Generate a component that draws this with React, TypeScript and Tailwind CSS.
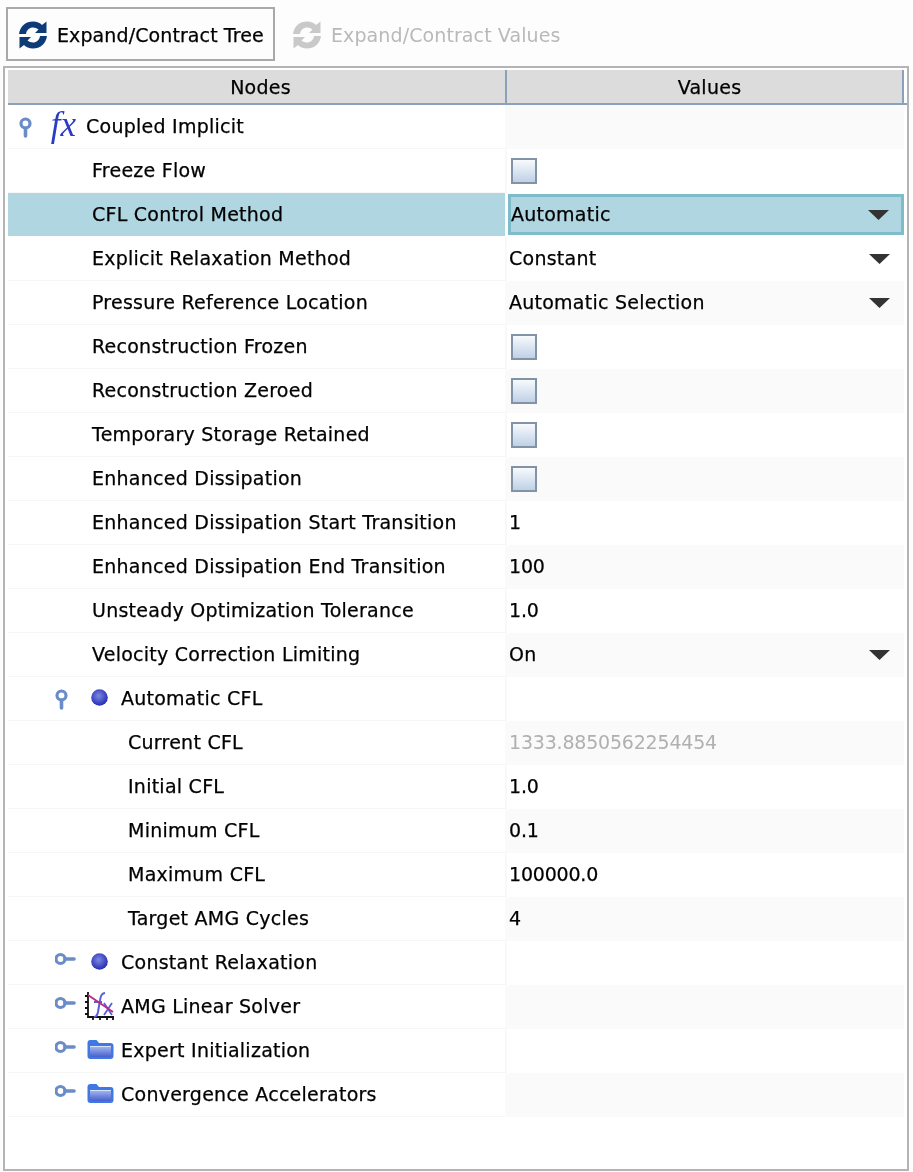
import React from "react";

const Expander = ({ open }: { open: boolean }) => (
  <svg width="22" height="22" viewBox="0 0 22 22" className="shrink-0">
    {open ? (
      <g fill="none" stroke="#6a8cc8">
        <circle cx="6.500" cy="7.500" r="4.500" strokeWidth="3.200" />
        <path d="M6.500 12v8" strokeWidth="3.600" strokeLinecap="round" />
      </g>
    ) : (
      <g fill="none" stroke="#6a8cc8">
        <circle cx="5.500" cy="7" r="4.500" strokeWidth="3.200" />
        <path d="M10 7h9" strokeWidth="3.600" strokeLinecap="round" />
      </g>
    )}
  </svg>
);

const Fx = () => (
  <span className="block w-[27px] -translate-y-[2px] text-center text-[35px] leading-none italic tracking-normal text-[#2b3bc4] [-webkit-text-stroke:0px] [font-family:'Liberation_Serif',serif]">
    fx
  </span>
);

const Ball = () => (
  <svg width="17" height="19" viewBox="0 0 17 19" className="shrink-0">
    <defs>
      <radialGradient id="ball" cx="0.45" cy="0.4" r="0.65">
        <stop offset="0" stopColor="#7f88e2" />
        <stop offset="1" stopColor="#1a25b0" />
      </radialGradient>
    </defs>
    <circle cx="8.500" cy="8.500" r="8.300" fill="url(#ball)" />
  </svg>
);

const Folder = () => (
  <svg width="27" height="24" viewBox="0 0 27 24" className="shrink-0">
    <defs>
      <linearGradient id="folder" x1="0" y1="0" x2="0" y2="1">
        <stop offset="0" stopColor="#a3b6ee" />
        <stop offset="1" stopColor="#4560cf" />
      </linearGradient>
    </defs>
    <path d="M.5 4q0-3 3-3h6l2.500 3h11.500q3 0 3 3v10q0 3-3 3h-20q-3 0-3-3z" fill="#3f78e4" />
    <path d="M3 7.500h21v9.500q0 1-1 1h-19q-1 0-1-1z" fill="url(#folder)" />
    <path d="M3 7.500h21" stroke="#d7e2fb" strokeWidth="1" />
  </svg>
);

const Chart = () => (
  <svg width="30" height="30" viewBox="0 0 30 30" className="shrink-0 -translate-y-[1px]">
    <path d="M3 1v25h26" fill="none" stroke="#111" strokeWidth="1.800" />
    <path d="M0 5h3M0 11h3M0 17h3M0 23h3M8 26v3M15 26v3M22 26v3M28 26v3" stroke="#111" strokeWidth="1.800" />
    <path d="M20 2q-4 0-5 7l-2 12q-1 5-4 5" fill="none" stroke="#5a5fd8" strokeWidth="2" />
    <path d="M9 11h8M19 12l8 12M27 12l-8 12" stroke="#5a5fd8" strokeWidth="1.800" />
    <path d="M3 4l25 17" stroke="#c0267f" strokeWidth="1.800" />
  </svg>
);

const Refresh = ({ muted }: { muted?: boolean }) => {
  const c = muted ? "#c9c9c9" : "#0f3a78";
  return (
    <svg width="30" height="28" viewBox="0 0 30 28" className="shrink-0">
      <path d="M1 13C2 5 8 .5 15 .5c4 0 7 1.500 9 3.500l4.500-3.500V12H17l3.500-3.500c-1.500-1.300-3.300-2-5.500-2-3.500 0-6.500 2.500-7 6.500z" fill={c} />
      <path d="M29 15c-1 8-7 12.500-14 12.500-4 0-7-1.500-9-3.500l-4.500 3.500V16H13l-3.500 3.500c1.500 1.300 3.300 2 5.500 2 3.500 0 6.500-2.500 7-6.500z" fill={c} />
    </svg>
  );
};

const Check = () => (
  <span className="ml-[2px] block h-[26px] w-[26px] border-2 border-[#8293a8] bg-gradient-to-b from-[#f8fafd] to-[#bfd1e6]" />
);

const Caret = ({ boxed }: { boxed?: boolean }) => (
  <svg
    width="21"
    height="11"
    viewBox="0 0 21 11"
    className={`absolute top-1/2 -translate-y-1/2 ${boxed ? "right-[12px]" : "right-[14px]"}`}
  >
    <path d="M0 .5h21L10.500 10.500z" fill="#333" />
  </svg>
);

type Row = {
  label: string;
  indent: string;
  lead?: React.ReactNode;
  check?: boolean;
  value?: string;
  select?: boolean;
  muted?: boolean;
  selected?: boolean;
};

const ballLead = (open: boolean) => (
  <>
    <Expander open={open} />
    <span className="w-[14px]" />
    <Ball />
    <span className="w-[13px]" />
  </>
);

const folderLead = (
  <>
    <Expander open={false} />
    <span className="w-[10px]" />
    <Folder />
    <span className="w-[7px]" />
  </>
);

const rows: Row[] = [
  {
    label: "Coupled Implicit",
    indent: "pl-[11px]",
    lead: (
      <>
        <Expander open />
        <span className="w-[9px]" />
        <Fx />
        <span className="w-[9px]" />
      </>
    ),
  },
  { label: "Freeze Flow", indent: "pl-[84px]", check: true },
  { label: "CFL Control Method", indent: "pl-[84px]", value: "Automatic", select: true, selected: true },
  { label: "Explicit Relaxation Method", indent: "pl-[84px]", value: "Constant", select: true },
  { label: "Pressure Reference Location", indent: "pl-[84px]", value: "Automatic Selection", select: true },
  { label: "Reconstruction Frozen", indent: "pl-[84px]", check: true },
  { label: "Reconstruction Zeroed", indent: "pl-[84px]", check: true },
  { label: "Temporary Storage Retained", indent: "pl-[84px]", check: true },
  { label: "Enhanced Dissipation", indent: "pl-[84px]", check: true },
  { label: "Enhanced Dissipation Start Transition", indent: "pl-[84px]", value: "1" },
  { label: "Enhanced Dissipation End Transition", indent: "pl-[84px]", value: "100" },
  { label: "Unsteady Optimization Tolerance", indent: "pl-[84px]", value: "1.0" },
  { label: "Velocity Correction Limiting", indent: "pl-[84px]", value: "On", select: true },
  { label: "Automatic CFL", indent: "pl-[47px]", lead: ballLead(true) },
  { label: "Current CFL", indent: "pl-[120px]", value: "1333.8850562254454", muted: true },
  { label: "Initial CFL", indent: "pl-[120px]", value: "1.0" },
  { label: "Minimum CFL", indent: "pl-[120px]", value: "0.1" },
  { label: "Maximum CFL", indent: "pl-[120px]", value: "100000.0" },
  { label: "Target AMG Cycles", indent: "pl-[120px]", value: "4" },
  { label: "Constant Relaxation", indent: "pl-[47px]", lead: ballLead(false) },
  {
    label: "AMG Linear Solver",
    indent: "pl-[47px]",
    lead: (
      <>
        <Expander open={false} />
        <span className="w-[8px]" />
        <Chart />
        <span className="w-[6px]" />
      </>
    ),
  },
  { label: "Expert Initialization", indent: "pl-[47px]", lead: folderLead },
  { label: "Convergence Accelerators", indent: "pl-[47px]", lead: folderLead },
];

const TableRow = ({ r, shade }: { r: Row; shade: boolean }) => {
  const valueClass = r.selected
    ? "mb-[2px] ml-[3px] mt-[1px] border-[3px] border-[#7ebccb] bg-[#b0d6e1]"
    : shade
      ? "bg-[#fafafa] pb-[1px] pl-[4px]"
      : "border-l-2 border-[#f8f8f8] pb-[1px] pl-[2px]";
  const numeric = r.value !== undefined && /^[\d.]+$/.test(r.value);
  return (
    <div className="grid h-[44px] grid-cols-[497px_1fr]">
      <div className={`flex items-center ${r.indent} ${r.selected ? "mb-[1px] bg-[#b0d6e1] pb-[1px]" : "border-b border-[#f6f6f6]"}`}>
        {r.lead}
        <span className="whitespace-nowrap">{r.label}</span>
      </div>
      <div className={`relative flex items-center ${valueClass}`}>
        {r.check && <Check />}
        {r.value && (
          <span className={`${numeric ? "tracking-[-0.2px]" : ""} ${r.muted ? "text-[#b0b0b0] [-webkit-text-stroke:0px]" : ""}`}>
            {r.value}
          </span>
        )}
        {r.select && <Caret boxed={r.selected} />}
      </div>
    </div>
  );
};

export default function App() {
  return (
    <div className="flex h-[1172px] w-[913px] flex-col bg-[#fdfdfd] pb-[1px] pl-[3px] pr-[4px] text-[19px] tracking-[0.25px] text-black blur-[0.3px] [-webkit-text-stroke:0.25px_currentColor] [font-family:'DejaVu_Sans',sans-serif]">
      <div className="flex h-[66px] items-start gap-[17px] pl-[3px] pt-[7px] tracking-[0.1px]">
        <button className="flex h-[54px] w-[269px] items-center gap-[9px] border-2 border-[#a9a9a9] pl-[10px] pt-[2px]">
          <Refresh />
          <span className="whitespace-nowrap">Expand/Contract Tree</span>
        </button>
        <div className="flex h-[54px] items-center gap-[9px] pt-[2px] text-[#b9b9b9] [-webkit-text-stroke:0px]">
          <Refresh muted />
          <span className="whitespace-nowrap">Expand/Contract Values</span>
        </div>
      </div>
      <div className="flex min-h-0 flex-1 flex-col border-2 border-[#b4b4b4] bg-white pl-[3px] pt-[2px]">
        <div className="grid h-[35px] shrink-0 grid-cols-[497px_2px_1fr] border-b-2 border-[#8ba0bb]">
          <div className="flex items-center justify-center bg-[#dcdcdc] pl-[8px] pt-[1px]">Nodes</div>
          <div className="bg-[#8ba0bb]" />
          <div className="mr-[3px] flex items-center justify-center border-r-2 border-[#8ba0bb] bg-[#dcdcdc] pl-[10px] pt-[1px]">
            Values
          </div>
        </div>
        <div className="mr-[3px]">
          {rows.map((r, i) => (
            <TableRow key={r.label} r={r} shade={i % 2 === 0} />
          ))}
        </div>
      </div>
    </div>
  );
}
